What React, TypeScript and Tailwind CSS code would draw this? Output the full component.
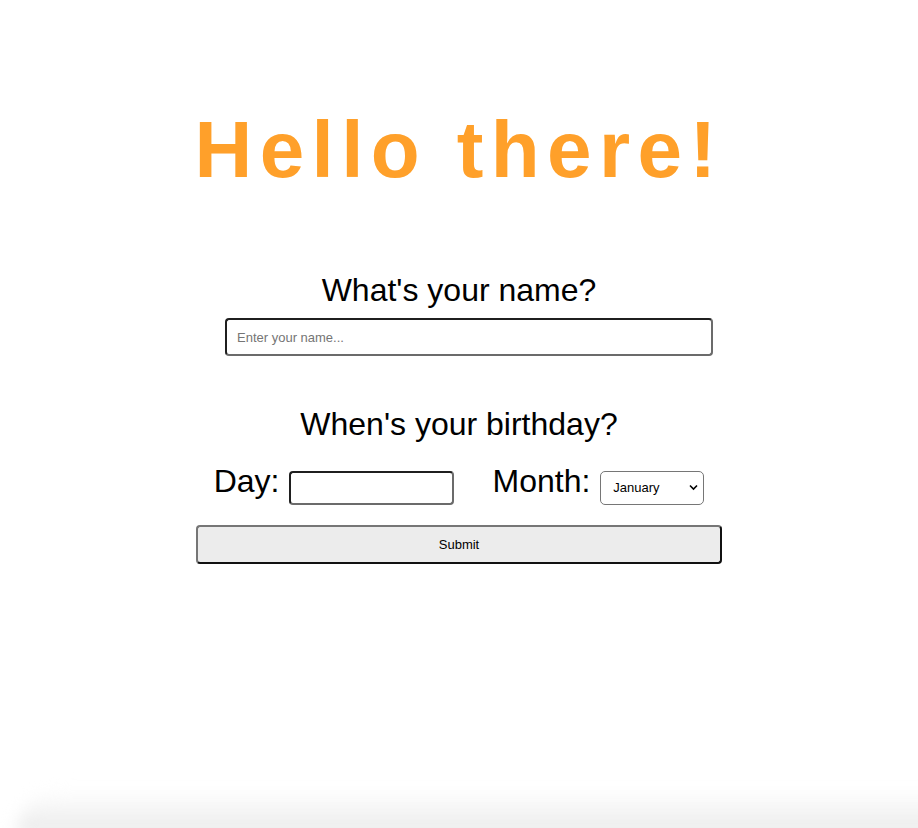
import * as React from "react";

const months = [
  "January",
  "February",
  "March",
  "April",
  "May",
  "June",
  "July",
  "August",
  "September",
  "October",
  "November",
  "December",
];

const App: React.FC = () => {
  const [name, setName] = React.useState("");
  const [day, setDay] = React.useState("");
  const [month, setMonth] = React.useState("January");

  return (
    <div className="relative flex h-[828px] flex-col overflow-hidden bg-white font-['Liberation_Sans',Arial,sans-serif] text-black">
      <main className="flex flex-col items-center pt-[110px]">
        <h1 className="text-[80px] font-bold leading-[80px] tracking-[7.4px] text-[#ffa02a]">
          Hello there!
        </h1>

        <form
          className="flex flex-col items-center"
          onSubmit={(e) => e.preventDefault()}
        >
          <label htmlFor="name" className="mt-[84px] text-[32px] leading-[32px]">
            What's your name?
          </label>
          <input
            id="name"
            value={name}
            onChange={(e) => setName(e.target.value)}
            placeholder="Enter your name..."
            className="ml-[20px] mt-[12px] h-[38px] w-[488px] rounded-[4px] border-2 border-t-[#1f1f1f] border-l-[#1f1f1f] border-b-[#6b6b6b] border-r-[#6b6b6b] px-[10px] text-[13px] outline-none placeholder:text-[#757575]"
          />

          <p className="mt-[52px] text-[32px] leading-[32px]">
            When's your birthday?
          </p>

          <div className="mt-[25px] flex items-start">
            <label htmlFor="day" className="text-[32px] leading-[32px]">
              Day:
            </label>
            <input
              id="day"
              value={day}
              onChange={(e) => setDay(e.target.value)}
              className="ml-[10px] mt-[6px] h-[34px] w-[165px] rounded-[4px] border-2 border-t-[#1f1f1f] border-l-[#1f1f1f] border-b-[#6b6b6b] border-r-[#6b6b6b] px-[6px] text-[13px] outline-none"
            />
            <label htmlFor="month" className="ml-[38px] text-[32px] leading-[32px]">
              Month:
            </label>
            <div className="relative ml-[10px] mt-[6px]">
              <select
                id="month"
                value={month}
                onChange={(e) => setMonth(e.target.value)}
                className="h-[34px] w-[104px] appearance-none rounded-[5px] border border-[#767676] bg-white pl-[12px] text-[13px] outline-none"
              >
                {months.map((m) => (
                  <option key={m}>{m}</option>
                ))}
              </select>
              <svg
                className="pointer-events-none absolute right-[6px] top-[13px]"
                width="9"
                height="7"
                viewBox="0 0 9 7"
              >
                <path
                  d="M1 1.5 L4.5 5 L8 1.5"
                  fill="none"
                  stroke="#000"
                  strokeWidth="1.6"
                />
              </svg>
            </div>
          </div>

          <button
            type="submit"
            className="mt-[20px] h-[39px] w-[526px] rounded-[4px] border-2 border-t-[#767676] border-l-[#767676] border-b-[#111] border-r-[#111] bg-[#ececec] text-[13px]"
          >
            Submit
          </button>
        </form>
      </main>

      {/* faint shadow along the bottom edge of the window */}
      <div className="-mr-[20px] mt-auto ml-[16px] h-[46px] translate-y-[8px] rounded-tl-[46px] bg-gradient-to-b from-white to-[#e8e8e8] blur-[8px]" />
    </div>
  );
};

export default App;
